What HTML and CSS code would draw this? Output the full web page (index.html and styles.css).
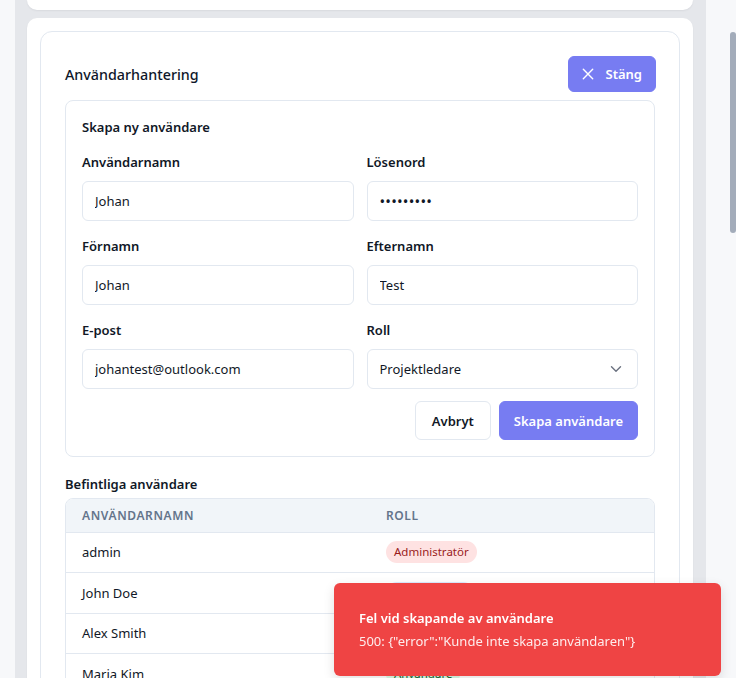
FILE: index.html
```html
<!DOCTYPE html>
<html lang="sv">
<head>
<meta charset="utf-8">
<title>Användarhantering</title>
<link rel="stylesheet" href="styles.css">
</head>
<body>
<div class="shell">
  <div class="card card-top"></div>
  <div class="card card-main">
    <section class="panel">
      <div class="panel-head">
        <h2 class="panel-title">Användarhantering</h2>
        <button class="btn btn-primary btn-close" type="button">
          <svg class="icon-x" width="16" height="16" viewBox="0 0 16 16" fill="none" stroke="currentColor" stroke-width="1.4" stroke-linecap="round"><path d="M3.3 3.3l9.4 9.4M12.7 3.3l-9.4 9.4"/></svg>
          <span>Stäng</span>
        </button>
      </div>

      <form class="form-card">
        <h3 class="form-title">Skapa ny användare</h3>
        <div class="form-grid">
          <label class="field">
            <span class="field-label">Användarnamn</span>
            <input class="input" type="text" value="Johan">
          </label>
          <label class="field">
            <span class="field-label">Lösenord</span>
            <input class="input input-pass" type="password" value="123456789">
          </label>
          <label class="field">
            <span class="field-label">Förnamn</span>
            <input class="input" type="text" value="Johan">
          </label>
          <label class="field">
            <span class="field-label">Efternamn</span>
            <input class="input" type="text" value="Test">
          </label>
          <label class="field">
            <span class="field-label">E-post</span>
            <input class="input" type="text" value="johantest@outlook.com">
          </label>
          <label class="field">
            <span class="field-label">Roll</span>
            <span class="select-wrap">
              <select class="input select">
                <option>Projektledare</option>
                <option>Administratör</option>
                <option>Användare</option>
              </select>
              <svg class="chevron" width="12" height="8" viewBox="0 0 12 8" fill="none" stroke="currentColor" stroke-width="1.4" stroke-linecap="round" stroke-linejoin="round"><path d="M1.5 1.8L6 6.2l4.5-4.4"/></svg>
            </span>
          </label>
        </div>
        <div class="form-actions">
          <button class="btn btn-outline" type="button">Avbryt</button>
          <button class="btn btn-primary btn-submit" type="button">Skapa användare</button>
        </div>
      </form>

      <h3 class="list-title">Befintliga användare</h3>
      <div class="table-wrap">
        <table class="users">
          <thead>
            <tr><th class="col-name">Användarnamn</th><th>Roll</th></tr>
          </thead>
          <tbody>
            <tr><td>admin</td><td><span class="badge badge-red">Administratör</span></td></tr>
            <tr><td>John Doe</td><td><span class="badge badge-blue">Projektledare</span></td></tr>
            <tr><td>Alex Smith</td><td><span class="badge badge-blue">Projektledare</span></td></tr>
            <tr><td>Maria Kim</td><td><span class="badge badge-green">Användare</span></td></tr>
          </tbody>
        </table>
      </div>
    </section>
  </div>
</div>

<div class="scroll-thumb"></div>

<div class="toast" role="alert">
  <div class="toast-title">Fel vid skapande av användare</div>
  <div class="toast-msg">500: {"error":"Kunde inte skapa användaren"}</div>
</div>
</body>
</html>
```

FILE: styles.css
```css
* { box-sizing: border-box; }

html, body {
  margin: 0;
  height: 100%;
  overflow: hidden;
}

body {
  background: #f7f8fa;
  font-family: "Noto Sans", "Open Sans", sans-serif;
  color: #1f2937;
  font-size: 13px;
}

.shell {
  margin-left: 15px;
  width: 691px;
  min-height: 100%;
  background: #e5e7eb;
  padding: 0 13px 0 12px;
}

.card {
  background: #ffffff;
  border-radius: 10px;
  box-shadow: 0 1px 2px rgba(15, 23, 42, 0.06);
}

.card-top {
  height: 10px;
  border-radius: 0 0 10px 10px;
}

.card-main {
  margin-top: 8px;
  padding: 13px 13px 0 13px;
  min-height: 700px;
}

.panel {
  border: 1px solid #e2e8f0;
  border-radius: 12px;
  padding: 24px 24px 24px;
}

.panel-head {
  display: flex;
  align-items: center;
  justify-content: space-between;
  height: 36px;
  margin-right: -1px;
}

.panel-title {
  margin: 0;
  font-size: 14.3px;
  font-weight: 500;
  color: #0f172a;
}

.btn {
  font-family: inherit;
  font-size: 13px;
  font-weight: 600;
  height: 39px;
  border-radius: 6px;
  padding: 0 16px;
  cursor: pointer;
  display: inline-flex;
  align-items: center;
}

.btn-primary {
  background: #777cf2;
  color: #ffffff;
  border: 1px solid #777cf2;
}

.btn-submit { padding: 0 14px; }

.btn-outline {
  background: #ffffff;
  color: #111827;
  border: 1px solid #e2e8f0;
  padding: 0 16px;
}

.btn-close {
  height: 36px;
  padding: 0 13px 0 11px;
  gap: 10px;
}

.icon-x { display: block; }

.form-card {
  margin-top: 8px;
  border: 1px solid #e2e8f0;
  border-radius: 8px;
  padding: 16px;
}

.form-title {
  margin: 0;
  font-size: 13px;
  font-weight: 600;
  line-height: 20px;
  color: #111827;
}

.form-grid {
  margin-top: 15px;
  display: grid;
  grid-template-columns: 1fr 1fr;
  column-gap: 13px;
  row-gap: 15px;
}

.field {
  display: flex;
  flex-direction: column;
  gap: 9px;
}

.field-label {
  font-weight: 600;
  font-size: 13px;
  line-height: 20px;
  color: #111827;
}

.input {
  height: 40px;
  width: 100%;
  border: 1px solid #e2e8f0;
  border-radius: 6px;
  padding: 0 12px;
  font-family: inherit;
  font-size: 13px;
  color: #111827;
  background: #ffffff;
  outline: none;
}

.input-pass {
  font-size: 15px;
  letter-spacing: 0.2px;
}

.select-wrap {
  position: relative;
  display: block;
}

.select {
  appearance: none;
  -webkit-appearance: none;
}

.chevron {
  position: absolute;
  right: 16px;
  top: 16px;
  color: #6b7280;
}

.form-actions {
  margin-top: 12px;
  display: flex;
  justify-content: flex-end;
  gap: 8px;
}

.list-title {
  margin: 17px 0 4px;
  font-size: 13px;
  font-weight: 600;
  line-height: 20px;
  color: #111827;
}

.table-wrap {
  border: 1px solid #e2e8f0;
  border-radius: 8px;
  overflow: hidden;
}

.users {
  width: 100%;
  border-collapse: collapse;
}

.users th {
  background: #f1f5f9;
  height: 33px;
  text-align: left;
  padding: 0 16px;
  font-size: 12px;
  font-weight: 600;
  letter-spacing: 0.05em;
  text-transform: uppercase;
  color: #64748b;
  border-bottom: 1px solid #e2e8f0;
}

.users .col-name { width: 304px; }

.users td {
  height: 40.5px;
  padding: 0 16px;
  font-size: 13px;
  color: #111827;
  border-bottom: 1px solid #e2e8f0;
}

.badge {
  display: inline-block;
  height: 22px;
  line-height: 22px;
  padding: 0 8px;
  border-radius: 11px;
  font-size: 11.5px;
}

.badge-red { background: #fee2e2; color: #991b1b; }
.badge-blue { background: #dbeafe; color: #1e40af; }
.badge-green { background: #dcfce7; color: #166534; }

.scroll-thumb {
  position: fixed;
  right: 0;
  top: 32px;
  width: 6px;
  height: 201px;
  border-radius: 3px;
  background: #a3acba;
}

.toast {
  position: fixed;
  right: 15px;
  bottom: 2px;
  width: 387px;
  height: 93px;
  background: #ef4444;
  border-radius: 6px;
  padding: 25px 24px 0 25px;
  color: #ffffff;
  box-shadow: 0 4px 12px rgba(0, 0, 0, 0.12);
}

.toast-title {
  font-size: 13px;
  font-weight: 600;
  line-height: 20px;
}

.toast-msg {
  margin-top: 3px;
  font-size: 13px;
  line-height: 20px;
  opacity: 0.9;
}
```
